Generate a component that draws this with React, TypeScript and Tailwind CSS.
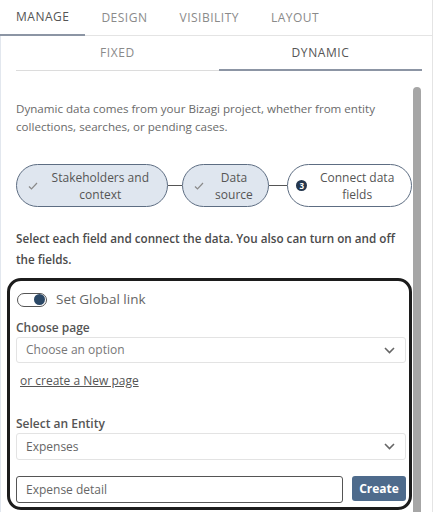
import React from "react";

function Check() {
  return (
    <svg width="10" height="8" viewBox="0 0 10 8" className="shrink-0">
      <polyline points="1,4.5 3.5,7 9,1" fill="none" stroke="#8a8a8a" strokeWidth="1.2" />
    </svg>
  );
}

function Chevron() {
  return (
    <svg width="11" height="7" viewBox="0 0 11 7" className="shrink-0">
      <polyline points="1,1 5.5,5.5 10,1" fill="none" stroke="#666" strokeWidth="1.6" />
    </svg>
  );
}

export default function App() {
  return (
    <div className="w-[438px] h-[512px] overflow-hidden bg-white font-['Open_Sans',sans-serif]">
      <div className="w-[433px] h-[512px] border-r border-[#e4e4e4] flex flex-col">
        {/* top tabs */}
        <div className="flex h-[36px] border-b border-[#e4e4e4] shrink-0">
          <div className="px-4 flex items-center text-[12px] tracking-[0.5px] text-[#555] border-b-2 border-[#8c95a4] -mb-px">
            MANAGE
          </div>
          <div className="px-4 flex items-center text-[12px] tracking-[0.5px] text-[#8a8a8a]">DESIGN</div>
          <div className="px-4 flex items-center text-[12px] tracking-[0.5px] text-[#8a8a8a]">VISIBILITY</div>
          <div className="px-4 flex items-center text-[12px] tracking-[0.5px] text-[#8a8a8a]">LAYOUT</div>
        </div>

        <div className="flex-1 border-l border-[#e2e7ee] flex flex-col min-h-0">
          {/* sub tabs */}
          <div className="ml-[15px] w-[406px] grid grid-cols-2 h-[35px] shrink-0">
            <div className="flex items-center justify-center text-[12px] tracking-[0.6px] text-[#8a8a8a] border-b border-[#dcdcdc]">
              FIXED
            </div>
            <div className="flex items-center justify-center text-[12px] tracking-[0.6px] text-[#555] border-b-2 border-[#8c95a4]">
              DYNAMIC
            </div>
          </div>

          <div className="flex flex-1 min-h-0">
            <div className="w-[411px] pl-[6px] pt-[29px] shrink-0">
              <p className="pl-[9px] pr-[4px] text-[11.6px] leading-[18px] text-[#6a6a6a]">
                Dynamic data comes from your Bizagi project, whether from entity collections, searches, or pending cases.
              </p>

              {/* steps */}
              <div className="pl-[9px] mt-[28px] flex items-center">
                <div className="w-[152px] h-[43px] rounded-full border border-[#5d6d82] bg-[#dfe6ef] flex items-center pl-[11px] pr-[4px]">
                  <Check />
                  <div className="flex-1 text-center text-[12px] leading-[17px] text-[#555]">
                    Stakeholders and
                    <br />
                    context
                  </div>
                </div>
                <div className="w-[14px] h-px bg-[#555]" />
                <div className="w-[88px] h-[43px] rounded-full border border-[#5d6d82] bg-[#dfe6ef] flex items-center pl-[11px] pr-[4px]">
                  <Check />
                  <div className="flex-1 text-center text-[12px] leading-[17px] text-[#555]">
                    Data
                    <br />
                    source
                  </div>
                </div>
                <div className="w-[18px] h-px bg-[#555]" />
                <div className="w-[125px] h-[43px] rounded-full border border-[#5d6d82] bg-white flex items-center pl-[8px] pr-[4px]">
                  <div className="w-[11px] h-[11px] rounded-full bg-[#24374e] text-white text-[8px] font-bold leading-none flex items-center justify-center shrink-0">
                    3
                  </div>
                  <div className="flex-1 text-center text-[12px] leading-[17px] text-[#555]">
                    Connect data
                    <br />
                    fields
                  </div>
                </div>
              </div>

              <p className="pl-[9px] mt-[21px] text-[11.7px] leading-[21px] font-semibold text-[#4a4a4a]">
                Select each field and connect the data. You also can turn on and off the fields.
              </p>

              {/* bordered box */}
              <div className="mt-[8px] h-[232px] border-[3px] border-[#1c1c1c] rounded-[14px] pl-[6px] pr-[3px] pt-[11px] flex flex-col">
                <div className="flex items-center h-[15px]">
                  <div className="ml-[1px] w-[30px] h-[14px] rounded-full border border-[#555] bg-white flex items-center justify-end pr-[1px]">
                    <div className="w-[11px] h-[11px] rounded-full bg-[#2b4866]" />
                  </div>
                  <span className="ml-[9px] text-[13.5px] text-[#666]">Set Global link</span>
                </div>

                <div className="mt-[13px] text-[12px] leading-[16px] font-semibold text-[#555]">Choose page</div>
                <div className="mt-[1px] h-[26px] border border-[#e3e3e3] rounded-[3px] flex items-center justify-between pl-[9px] pr-[10px]">
                  <span className="text-[12px] text-[#777]">Choose an option</span>
                  <Chevron />
                </div>

                <div className="mt-[10px] pl-[4px] text-[12px] leading-[16px] text-[#555] underline">
                  or create a New page
                </div>

                <div className="mt-[27px] text-[12px] leading-[16px] font-semibold text-[#555]">Select an Entity</div>
                <div className="mt-[1px] h-[27px] border border-[#e3e3e3] rounded-[3px] flex items-center justify-between pl-[9px] pr-[10px]">
                  <span className="text-[12px] text-[#666]">Expenses</span>
                  <Chevron />
                </div>

                <div className="mt-[16px] flex items-start">
                  <div className="w-[327px] h-[27px] border border-[#555] rounded-[3px] flex items-center pl-[9px]">
                    <span className="text-[12px] text-[#666]">Expense detail</span>
                  </div>
                  <button className="ml-[9px] w-[54px] h-[25px] rounded-[3px] bg-[#4e6b8c] text-white text-[12px] font-bold flex items-center justify-center">
                    Create
                  </button>
                </div>
              </div>
            </div>
            <div className="w-[8px] ml-[1px] mt-[16px] bg-[#a6a6a6] rounded-t-full shrink-0" />
          </div>
        </div>
      </div>
    </div>
  );
}
